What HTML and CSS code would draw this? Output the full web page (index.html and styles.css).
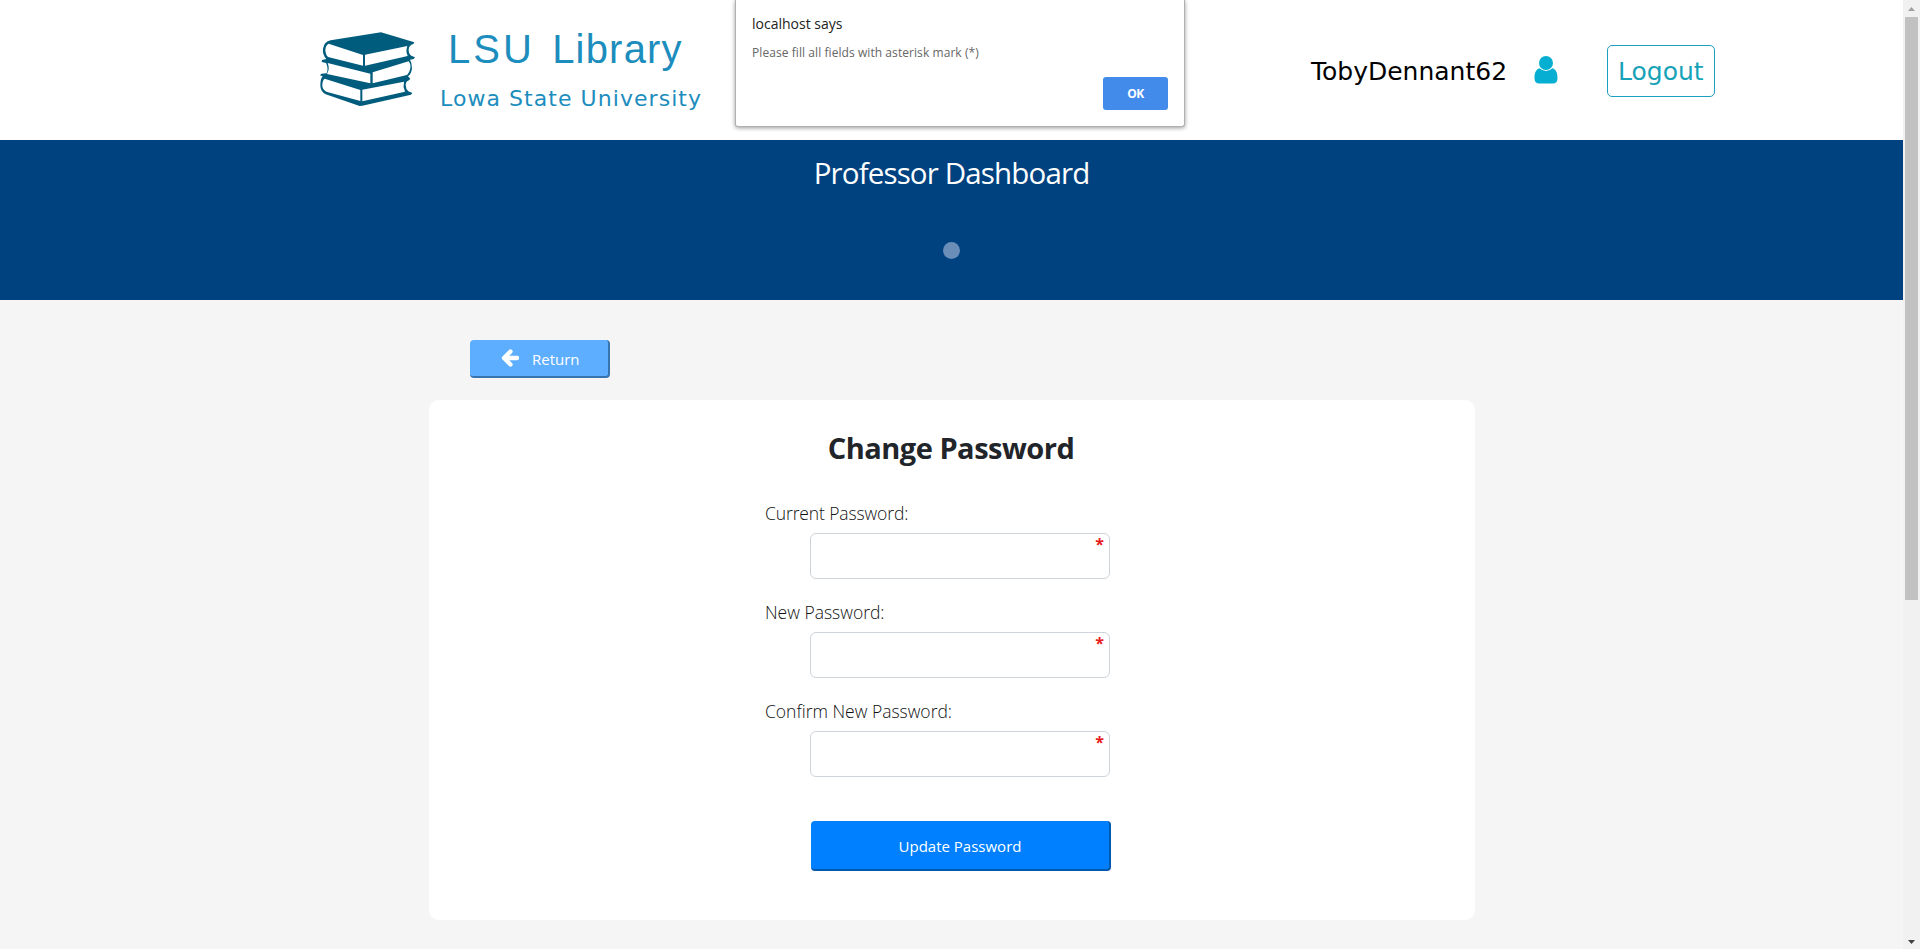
FILE: index.html
```html
<!DOCTYPE html>
<html lang="en">
<head>
<meta charset="utf-8">
<title>LSU Library - Change Password</title>
<link rel="stylesheet" href="styles.css">
</head>
<body>
<div class="window">
  <div class="page">
    <header class="header">
      <div class="brand">
        <svg class="books" viewBox="0 0 360 300" aria-hidden="true">
          <g fill="#005c7c">
            <path d="M213 37L313 67L310 72Q296 76 296 90Q296 102 304 107L315 112L311 117L300 119Q306 128 306 145Q304 162 294 169L301 176L297 181Q287 185 287 195Q287 207 295 214L307 219L303 224L157 257L149 258L47 223Q31 214 31 196Q31 177 38 169L30 166L34 161L50 160Q56 143 48 129L35 126L36 120L49 117Q37 104 39 86Q42 65 62 61Z"/>
          </g>
          <g fill="#fff">
            <path d="M56 71L159 105V137L57 112Q46 106 46 89Q47 75 56 71Z"/>
            <path d="M165 104L292 78Q286 92 293 108L165 137Z"/>
            <path d="M53 129L181 161V190L51 162Q60 146 53 129Z"/>
            <path d="M188 157L296 124Q303 132 301 145Q299 158 291 165L188 190Z"/>
            <path d="M44 176L151 210V243L49 215Q36 207 37 195Q37 181 44 176Z"/>
            <path d="M157 209L282 185Q278 200 285 215L157 244Z"/>
          </g>
        </svg>
        <div class="brand-text">
          <div class="brand-name"><span class="brand-abbr">LSU</span> <span>Library</span></div>
          <div class="brand-sub">Lowa State University</div>
        </div>
      </div>
      <div class="account">
        <span class="username">TobyDennant62</span>
        <svg class="user-icon" viewBox="0 0 24 28" aria-hidden="true">
          <path fill="#06aed2" d="M12 0a7 7 0 0 1 7 7a7 7 0 0 1-14 0a7 7 0 0 1 7-7zM5.500 12.200Q12 17.800 18.500 12.200C22 13 23.700 17 23.500 22.500Q23.300 27.500 18.800 27.500H5.200Q.700 27.500.500 22.500C.300 17 2 13 5.500 12.200Z"/>
        </svg>
        <a class="logout"><span>Logout</span></a>
      </div>
    </header>
    <section class="banner">
      <h1 class="banner-title"><span>Professor Dashboard</span></h1>
      <span class="dot"></span>
    </section>
    <main class="content">
      <button class="return">
        <svg class="arrow" viewBox="0 0 18 18" aria-hidden="true">
          <path d="M9.500 2.500L3 9L9.500 15.500M3.500 9H16" fill="none" stroke="#fff" stroke-width="4.300" stroke-linecap="round" stroke-linejoin="round"/>
        </svg>
        <span class="return-text">Return</span>
      </button>
      <form class="card">
        <h2 class="card-title"><span>Change Password</span></h2>
        <div class="field">
          <label class="label l-current">Current Password:</label>
          <div class="input">*</div>
        </div>
        <div class="field">
          <label class="label">New Password:</label>
          <div class="input">*</div>
        </div>
        <div class="field">
          <label class="label">Confirm New Password:</label>
          <div class="input">*</div>
        </div>
        <button class="update" type="button">Update Password</button>
      </form>
    </main>
  </div>
  <div class="scrollbar">
    <svg class="sb-arrow" viewBox="0 0 17 17"><path d="M5 11L8.500 7L12 11Z" fill="#a0a0a0"/></svg>
    <div class="thumb"></div>
    <svg class="sb-arrow sb-down" viewBox="0 0 17 17"><path d="M5 8L8.500 12L12 8Z" fill="#404040"/></svg>
  </div>
</div>
<div class="dialog" role="alertdialog">
  <div class="dialog-title">localhost says</div>
  <div class="dialog-text">Please fill all fields with asterisk mark (*)</div>
  <button class="ok">OK</button>
</div>
</body>
</html>
```
FILE: styles.css
```css
* { box-sizing: border-box; }
body {
  margin: 0;
  overflow: hidden;
  font-family: "Open Sans", "Noto Sans", sans-serif;
  color: #212529;
}
h1, h2 { margin: 0; }
button { font-family: inherit; padding: 0; margin: 0; }
.window { display: flex; width: 1920px; height: 949px; }
.page { width: 1903px; background: #f5f5f5; }
.header {
  display: flex;
  justify-content: space-between;
  height: 140px;
  padding: 20px 188px 0 310px;
  background: #fff;
}
.brand { display: flex; color: #1c8dbd; }
.books { width: 120px; height: 100px; }
.brand-text { padding: 6px 0 0 10px; white-space: nowrap; }
.brand-name {
  padding-left: 8px;
  font: 40px/46px "Liberation Sans", Arial, sans-serif;
  letter-spacing: 1.2px;
  word-spacing: 5px;
}
.brand-abbr { letter-spacing: 3px; }
.brand-sub {
  margin-top: 14px;
  font: 22px/26px "DejaVu Sans", Verdana, sans-serif;
  letter-spacing: 1.05px;
}
.account {
  display: flex;
  align-items: flex-start;
  font: 25px/30px "DejaVu Sans", Verdana, sans-serif;
}
.username { margin-top: 37px; width: 200px; color: #000; letter-spacing: 0; white-space: nowrap; }
.user-icon { width: 24px; height: 28px; margin: 36px 49px 0 23px; }
.logout {
  width: 108px;
  height: 52px;
  margin-top: 25px;
  padding: 11px 0 0 10px;
  border: 1px solid #1ba0bf;
  border-radius: 5px;
  color: #17a2b8;
  letter-spacing: 0;
}
.banner {
  display: flex;
  flex-direction: column;
  align-items: center;
  height: 160px;
  padding-top: 13px;
  background: #004280;
}
.banner-title {
  color: #fff;
  font-size: 29.5px;
  font-weight: 400;
  line-height: 39px;
  letter-spacing: -0.85px;
}
.dot { width: 17px; height: 17px; margin-top: 50px; border-radius: 50%; background: #6b8eb8; }
.content { padding: 40px 428px 0 429px; }
.return {
  display: flex;
  align-items: center;
  width: 140px;
  height: 38px;
  margin: 0 0 22px 41px;
  padding-left: 31px;
  gap: 13px;
  border: 0 solid #3774ae;
  border-width: 0 2px 2px 0;
  border-radius: 4px;
  background: #5eaeff;
  color: #fff;
  font-size: 15px;
}
.return-text { padding-top: 1px; }
.arrow { width: 18px; height: 18px; }
.card {
  height: 520px;
  padding-top: 28px;
  border-radius: 10px;
  background: #fff;
}
.card-title {
  height: 73px;
  text-align: center;
  font-size: 29px;
  font-weight: 700;
  line-height: 40px;
  letter-spacing: -0.5px;
}
.card-title span { margin-right: 2px; }
.field { height: 99px; padding-left: 336px; }
.label { display: block; height: 32px; color: #111; font-size: 17.5px; font-weight: 300; line-height: 25px; }
.l-current { letter-spacing: -0.12px; }
.input {
  width: 300px;
  height: 46px;
  margin-left: 45px;
  padding: 1px 5px 0 0;
  border: 1px solid #ced4da;
  border-radius: 6px;
  color: #e81c1c;
  text-align: right;
  font-size: 16px;
  font-weight: 700;
  line-height: 18px;
}
.update {
  display: block;
  width: 300px;
  height: 50px;
  margin: 23px 0 0 382px;
  padding-top: 2px;
  border: 0 solid #0059ad;
  border-width: 0 2px 2px 0;
  border-radius: 4px;
  background: #0080ff;
  color: #fff;
  font-size: 15px;
}
.scrollbar { display: flex; flex-direction: column; width: 17px; background: #f1f1f1; }
.sb-arrow { width: 17px; height: 17px; }
.thumb { width: 13px; height: 583px; margin-left: 2px; background: #c1c1c1; }
.sb-down { margin-top: auto; }
.dialog {
  position: absolute;
  left: 735px;
  top: 0;
  width: 450px;
  height: 127px;
  padding: 14px 16px 0;
  border: 1px solid #b0b0b0;
  border-top: 0;
  border-radius: 0 0 3px 3px;
  background: #fff;
  box-shadow: 0 1px 4px rgba(0, 0, 0, .4);
}
.dialog-title { color: #222; font-size: 14px; line-height: 20px; }
.dialog-text { margin-top: 10px; color: #666; font-size: 12px; line-height: 18px; letter-spacing: 0.07px; }
.ok {
  display: block;
  width: 65px;
  height: 33px;
  margin: 15px 0 0 auto;
  border: 0;
  border-radius: 3px;
  background: #428bea;
  color: #fff;
  font-size: 12px;
  font-weight: 700;
  letter-spacing: -0.5px;
}
```
